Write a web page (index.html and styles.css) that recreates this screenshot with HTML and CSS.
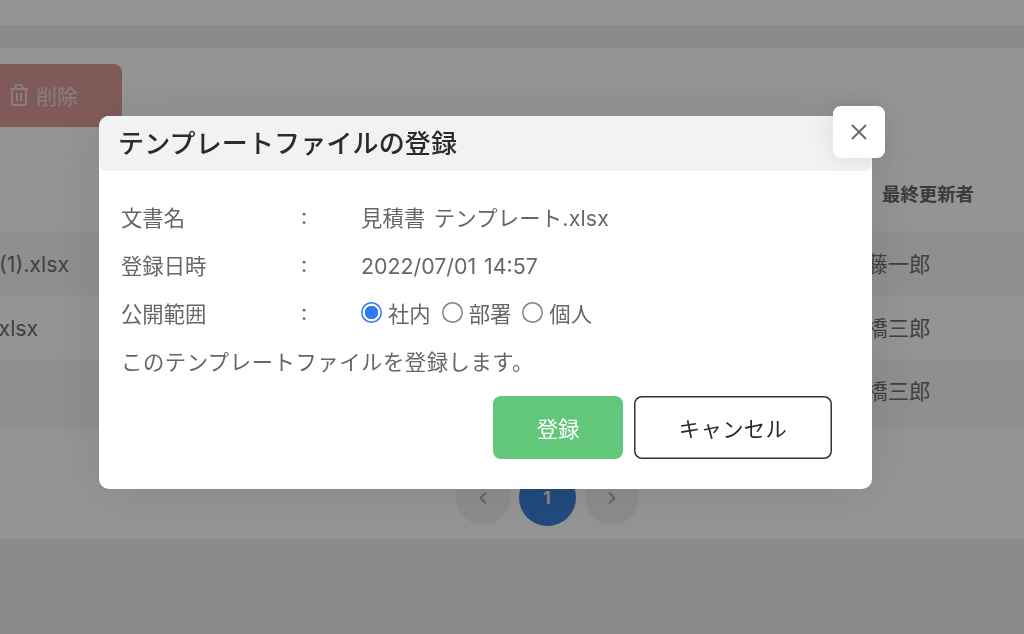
FILE: index.html
```html
<!DOCTYPE html>
<html lang="ja">
<head>
<meta charset="utf-8">
<title>テンプレートファイルの登録</title>
<link rel="stylesheet" href="styles.css">
</head>
<body>
<div class="page">
  <div class="topbar"></div>
  <main class="panel">
    <div class="toolbar">
      <button class="delete" type="button">
        <svg class="trash" viewBox="0 0 18 22" width="18" height="22" fill="none" stroke="currentColor" stroke-width="2"><path d="M0 5h18M5.500 5V2.500C5.500 1.700 6.200 1 7 1h4c.8 0 1.500.7 1.500 1.500V5M2 5v14c0 1.100.9 2 2 2h10c1.100 0 2-.9 2-2V5M7 9v8M11 9v8"/></svg>
        <span>削除</span>
      </button>
    </div>
    <div class="table">
      <div class="row head"><div class="name">文書名</div><div class="user">最終更新者</div></div>
      <div class="row band"><div class="name">見積書(1).xlsx</div><div class="user person">佐藤一郎</div></div>
      <div class="row"><div class="name">見積A.xlsx</div><div class="user person">高橋三郎</div></div>
      <div class="row band last"><div class="name"></div><div class="user person">高橋三郎</div></div>
    </div>
    <nav class="pager">
      <span class="pg"><svg viewBox="0 0 10 14" width="10" height="14" fill="none" stroke="currentColor" stroke-width="1.800"><path d="M8 1.500 2.500 7 8 12.500"/></svg></span>
      <span class="pg current">1</span>
      <span class="pg"><svg viewBox="0 0 10 14" width="10" height="14" fill="none" stroke="currentColor" stroke-width="1.800"><path d="M2 1.500 7.500 7 2 12.500"/></svg></span>
    </nav>
  </main>
</div>
<div class="overlay">
  <section class="modal">
    <button class="close" type="button" aria-label="閉じる">
      <svg viewBox="0 0 18 18" width="18" height="18" fill="none" stroke="#666" stroke-width="1.800"><path d="M2 2l14 14M16 2 2 16"/></svg>
    </button>
    <h2 class="title">テンプレートファイルの登録</h2>
    <div class="body">
      <dl class="fields">
        <dt>文書名</dt><dd class="colon">:</dd><dd class="filename">見積書 テンプレート.xlsx</dd>
        <dt>登録日時</dt><dd class="colon">:</dd><dd class="date">2022/07/01 14:57</dd>
        <dt>公開範囲</dt><dd class="colon">:</dd>
        <dd class="radios">
          <label><input type="radio" name="scope" checked>社内</label>
          <label><input type="radio" name="scope">部署</label>
          <label><input type="radio" name="scope">個人</label>
        </dd>
      </dl>
      <p class="message">このテンプレートファイルを登録します。</p>
      <div class="actions">
        <button class="btn primary" type="button">登録</button>
        <button class="btn cancel" type="button">キャンセル</button>
      </div>
    </div>
  </section>
</div>
</body>
</html>
```
FILE: styles.css
```css
* { box-sizing: border-box; }
html, body { margin: 0; height: 634px; overflow: hidden; }
body {
  font-family: "Inter", "Noto Sans CJK JP", sans-serif;
  background: #eeeeee;
  color: #777;
}
button { font-family: inherit; }

.page { height: 634px; display: flex; flex-direction: column; }
.topbar { height: 25px; background: #fff; margin-bottom: 23px; }
.panel { height: 491px; background: #fff; padding-top: 16px; display: flex; flex-direction: column; }

.toolbar { height: 63px; margin-bottom: 29px; }
.delete {
  width: 142px; height: 63px; margin-left: -20px; padding: 0 0 2px 30px;
  display: flex; align-items: center; gap: 8px;
  background: #dc9c9a; border: 0; border-radius: 8px;
  color: #ecd8d8; font-size: 21px;
}
.trash { flex: none; }

.table { display: flex; flex-direction: column; }
.row { height: 64px; padding-bottom: 2px; display: flex; align-items: center; font-size: 21.330px; color: #707070; justify-content: space-between; }
.head { height: 75px; padding-bottom: 3px; border-top: 1px solid #f7f7f7; font-weight: 700; font-size: 18.400px; color: #666; }
.band { background: #f7f7f7; }
.last { height: 69px; padding-bottom: 9px; }
.name { margin-left: -65px; }
.user { width: 142px; }
.person { width: 179px; }

.pager { margin-top: 41px; padding-left: 70px; display: flex; justify-content: center; align-items: center; gap: 9px; }
.pg {
  width: 54px; height: 54px; border-radius: 50%; background: #f2f2f2;
  display: flex; align-items: center; justify-content: center; color: #aaa;
}
.current { width: 57px; height: 57px; background: #3a80d5; color: #e5e5e5; font-weight: 700; font-size: 18px; }

.overlay { position: fixed; inset: 0; background: rgba(0, 0, 0, .42); }
.modal {
  position: absolute; left: 99px; top: 116px; width: 773px; height: 373px;
  background: #fff; border-radius: 10px; color: #666;
  box-shadow: 0 0 60px rgba(0, 0, 0, .1);
}
.close {
  position: absolute; right: -13px; top: -10px; width: 52px; height: 52px; padding: 0;
  display: flex; align-items: center; justify-content: center;
  background: #fff; border: 0; border-radius: 8px;
  box-shadow: 0 0 24px rgba(0, 0, 0, .1);
}
.title {
  margin: 0; height: 55px; padding: 0 19px 4px;
  display: flex; align-items: center;
  background: #f2f2f2; border-radius: 10px 10px 8px 8px;
  font-size: 26px; font-weight: 500; letter-spacing: .150px; color: #2b2b2b;
}
.body { padding: 21px 40px 0 22px; font-size: 21.330px; }
.fields {
  margin: 0; display: grid; grid-template-columns: 180px 60px 1fr;
  grid-auto-rows: 48px; align-items: center;
}
.fields dt, .fields dd { margin: 0; }
.filename { word-spacing: 2px; letter-spacing: .200px; }
.date { word-spacing: 2px; padding-top: 3px; }
.radios { display: flex; gap: 11px; }
.radios label { display: flex; align-items: center; gap: 6px; }
.radios input {
  appearance: none; width: 21px; height: 21px; margin: 0; border-radius: 50%;
  box-shadow: inset 0 0 0 1.500px #808080; background: #fff;
}
.radios input:checked {
  box-shadow: inset 0 0 0 1.500px #3478f6;
  background: radial-gradient(circle, #3478f6 0 6.500px, #fff 7px);
}
.message { margin: 0; height: 48px; display: flex; align-items: center; letter-spacing: .550px; }
.actions { margin-top: 12px; display: flex; justify-content: flex-end; gap: 11px; }
.btn { height: 63px; border: 0; border-radius: 8px; font-size: 21.330px; }
.primary { width: 130px; background: #62c77a; color: #fff; }
.cancel { width: 198px; background: #fff; box-shadow: inset 0 0 0 1.500px #333; color: #2b2b2b; letter-spacing: .400px; }
```
